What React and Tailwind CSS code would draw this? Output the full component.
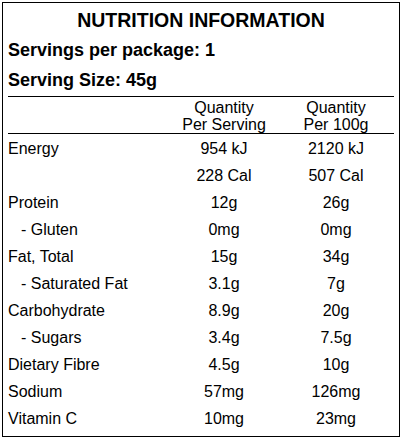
const rows = [
  { label: 'Energy', serving: '954 kJ', per100: '2120 kJ' },
  { label: '', serving: '228 Cal', per100: '507 Cal' },
  { label: 'Protein', serving: '12g', per100: '26g' },
  { label: '- Gluten', serving: '0mg', per100: '0mg', sub: true },
  { label: 'Fat, Total', serving: '15g', per100: '34g' },
  { label: '- Saturated Fat', serving: '3.1g', per100: '7g', sub: true },
  { label: 'Carbohydrate', serving: '8.9g', per100: '20g' },
  { label: '- Sugars', serving: '3.4g', per100: '7.5g', sub: true },
  { label: 'Dietary Fibre', serving: '4.5g', per100: '10g' },
  { label: 'Sodium', serving: '57mg', per100: '126mg' },
  { label: 'Vitamin C', serving: '10mg', per100: '23mg' },
];

export default function App() {
  return (
    <div className="bg-white w-[402px] h-[440px] pt-[2px] pl-[2px] text-black" style={{ fontFamily: '"Liberation Sans", Arial, sans-serif' }}>
      <div className="w-[398px] h-[435px] border border-black px-[5px]">
        <h1 className="text-center font-bold text-[19.5px] leading-[30px] pt-[2px]">NUTRITION INFORMATION</h1>
        <div className="font-bold text-[18px] leading-[30px]">Servings per package: 1</div>
        <div className="font-bold text-[18px] leading-[31px] border-b border-black">Serving Size: 45g</div>
        <div className="grid grid-cols-[160px_112px_112px] text-[16px] leading-[17px] pt-[2px] border-b border-black">
          <div></div>
          <div className="text-center">Quantity<br />Per Serving</div>
          <div className="text-center">Quantity<br />Per 100g</div>
        </div>
        <div className="pt-[1px]">
          {rows.map((r, i) => (
            <div key={i} className="grid grid-cols-[160px_112px_112px] text-[16px] leading-[27px]">
              <div className={r.sub ? 'pl-[13px]' : ''}>{r.label}</div>
              <div className="text-center">{r.serving}</div>
              <div className="text-center">{r.per100}</div>
            </div>
          ))}
        </div>
      </div>
    </div>
  );
}
